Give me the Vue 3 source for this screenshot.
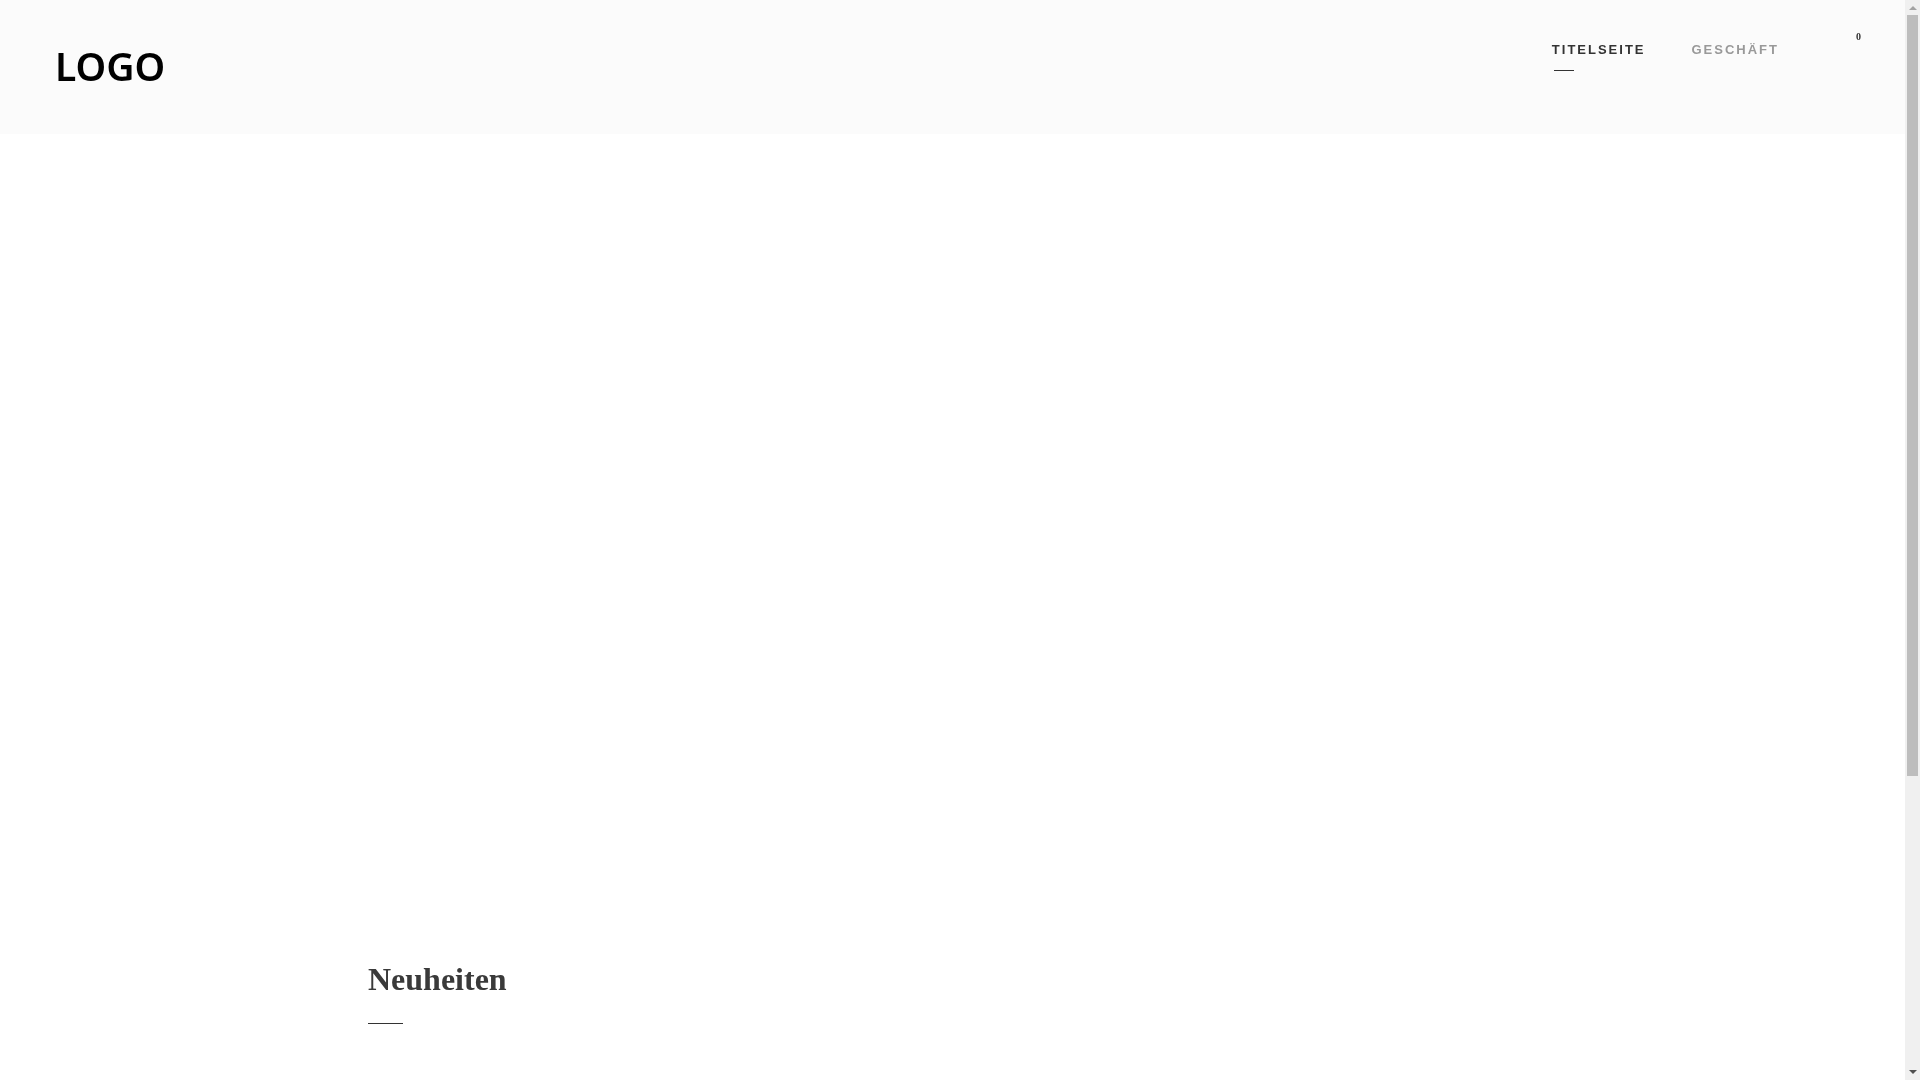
<template>
  <div class="window">
    <main class="page">
      <header class="header">
        <a class="logo">LOGO</a>
        <nav class="nav">
          <a class="nav-link active">TITELSEITE</a>
          <a class="nav-link">GESCHÄFT</a>
        </nav>
        <span class="cart-count">{{ cartCount }}</span>
      </header>
      <section class="hero"></section>
      <section class="news">
        <h2 class="news-title">Neuheiten</h2>
        <div class="news-line"></div>
      </section>
    </main>
    <aside class="scrollbar">
      <span class="arrow arrow-up"></span>
      <div class="thumb"></div>
      <span class="arrow arrow-down"></span>
    </aside>
  </div>
</template>

<script setup>
const cartCount = 0;
</script>

<style>
html,
body {
  margin: 0;
  background: #fff;
}
</style>

<style scoped>
.window {
  display: flex;
  height: 1080px;
  overflow: hidden;
}

.page {
  flex: 1;
  min-width: 0;
  background: #fff;
  will-change: transform;
}

.header {
  display: flex;
  height: 134px;
  padding-left: 55px;
  background: #fbfbfb;
}

.logo {
  margin-top: 37px;
  font-family: "Noto Sans", sans-serif;
  font-size: 39px;
  font-weight: 600;
  line-height: 58px;
  color: #000;
}

.nav {
  display: flex;
  gap: 46px;
  margin-left: auto;
  padding-top: 42px;
}

.nav-link {
  position: relative;
  font-family: "Liberation Sans", Arial, sans-serif;
  font-size: 13px;
  font-weight: 700;
  letter-spacing: 2px;
  line-height: 15px;
  color: #999;
}

.nav-link.active {
  color: #333;
}

.nav-link.active::after {
  content: "";
  position: absolute;
  left: 2px;
  top: 28px;
  width: 20px;
  height: 1px;
  background: #333;
}

.cart-count {
  width: 6px;
  margin-left: 77px;
  margin-right: 43px;
  padding-top: 31px;
  font-family: "Liberation Serif", serif;
  font-size: 10px;
  font-weight: 700;
  line-height: 12px;
  color: #333;
}

.hero {
  height: 825px;
}

.news {
  padding-left: 368px;
}

.news-title {
  margin: 0;
  font-family: "Liberation Serif", serif;
  font-size: 32px;
  font-weight: 700;
  line-height: 40px;
  color: #3a3a3a;
}

.news-line {
  width: 35px;
  height: 1px;
  margin-top: 24px;
  background: #333;
}

.scrollbar {
  display: flex;
  flex-direction: column;
  align-items: center;
  flex: 0 0 15px;
  background: #f0f0f0;
}

.arrow {
  width: 0;
  height: 0;
  border-left: 4px solid transparent;
  border-right: 4px solid transparent;
}

.arrow-up {
  margin: 6px 0 5px;
  border-bottom: 4px solid #a3a3a3;
}

.thumb {
  width: 11px;
  height: 761px;
  background: #bdbdbd;
}

.arrow-down {
  margin-top: auto;
  margin-bottom: 6px;
  border-top: 4px solid #505050;
}
</style>
